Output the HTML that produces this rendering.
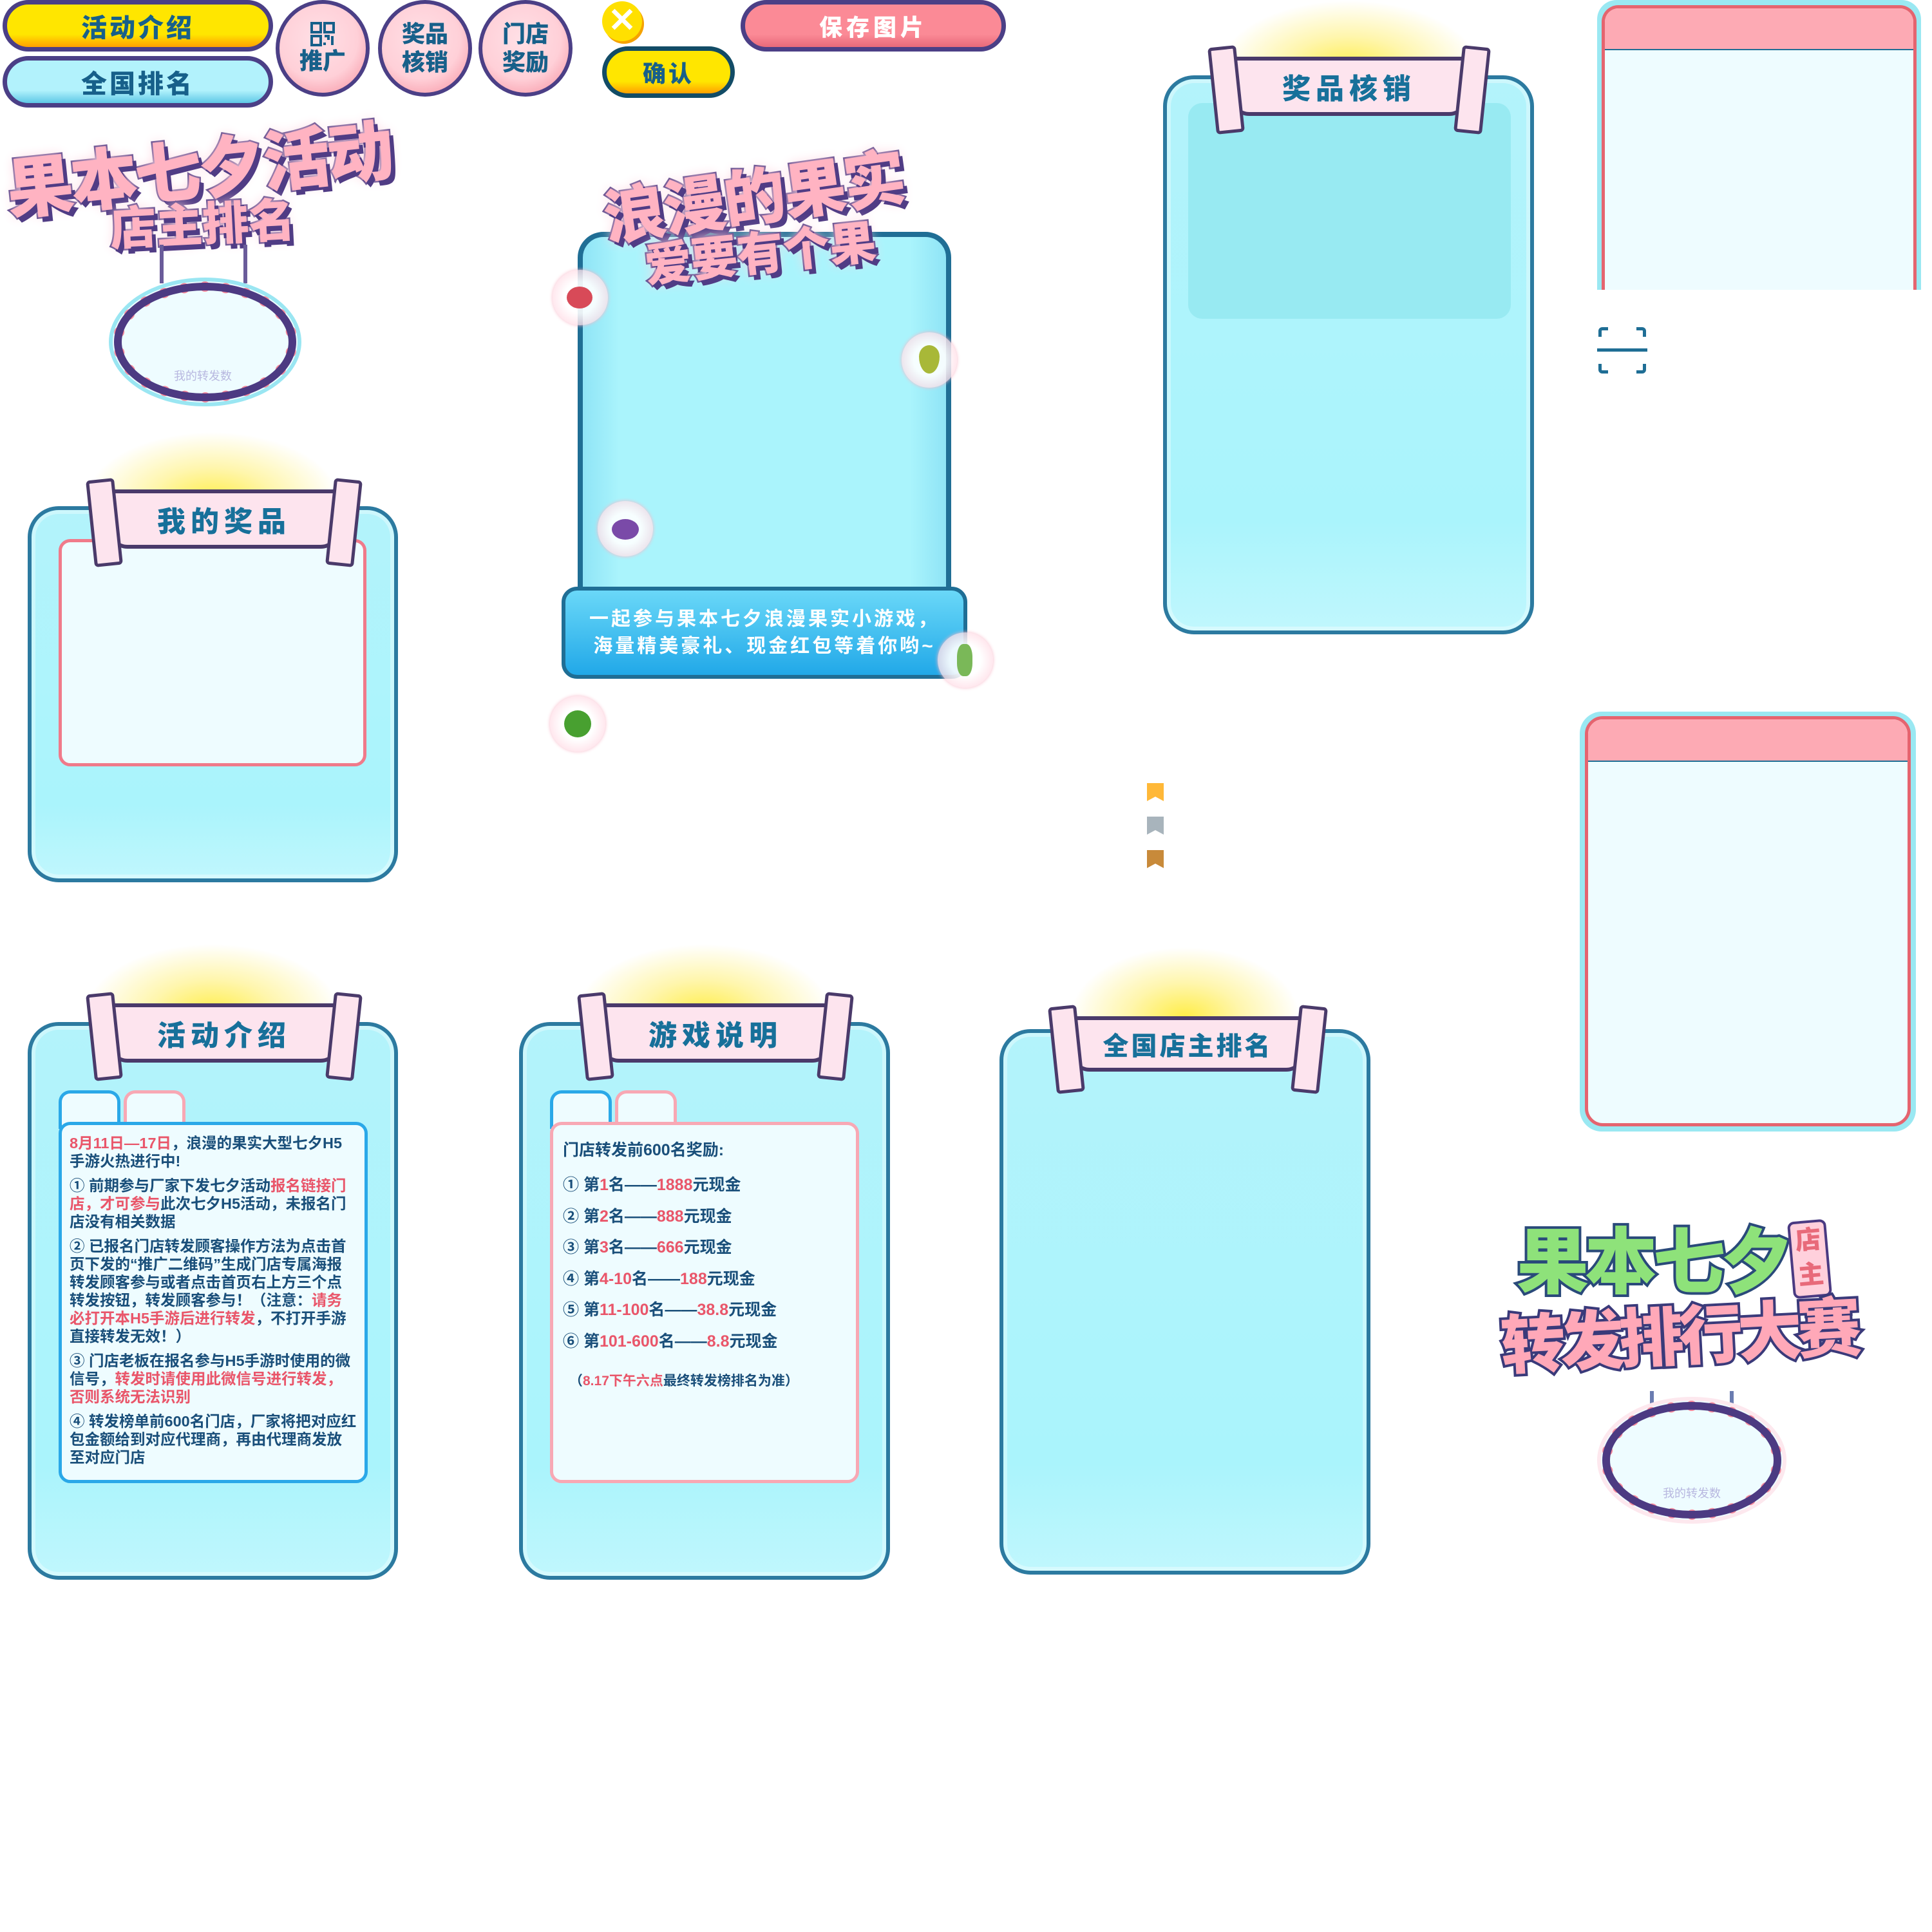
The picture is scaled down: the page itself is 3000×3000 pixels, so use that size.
<!DOCTYPE html>
<html><head><meta charset="utf-8">
<style>
*{margin:0;padding:0;box-sizing:border-box}
body{width:3000px;height:3000px;background:#fff;position:relative;overflow:hidden;font-family:"Liberation Sans","Noto Sans CJK SC",sans-serif}
.a{position:absolute}
.pill{position:absolute;border:7px solid #4b3f86;border-radius:60px;display:flex;align-items:center;justify-content:center;font-weight:900;color:#17608a;font-size:40px;letter-spacing:4px}
.circ{position:absolute;border:6px solid #4b3f86;border-radius:50%;background:radial-gradient(circle at 45% 40%,#ffe0e6 0,#ffd0d8 55%,#f48a9a 100%);display:flex;flex-direction:column;align-items:center;justify-content:center;text-align:center;font-weight:900;color:#17608a;font-size:36px;line-height:44px}
.card{position:absolute;border:6px solid #2c7aa0;border-radius:48px;background:linear-gradient(#b3f3fb,#aaf4fc 80%,#c0f7fd);box-shadow:inset 0 0 0 6px rgba(255,255,255,.35)}
.rays{position:absolute;height:120px;background:radial-gradient(ellipse at 50% 100%,rgba(255,236,60,.95) 0,rgba(255,240,120,.6) 35%,rgba(255,255,255,0) 70%)}
.ribbon{position:absolute;background:#fde4ee;border:6px solid #4a3a6a;border-radius:10px 10px 30px 30px/10px 10px 30px 30px;display:flex;align-items:center;justify-content:center;font-weight:900;color:#17709a;font-size:44px;letter-spacing:8px}
.ribbon:before,.ribbon:after{content:"";position:absolute;top:-22px;width:34px;height:125px;background:#fde4ee;border:5px solid #4a3a6a;border-radius:6px}
.ribbon:before{left:-34px;transform:rotate(-6deg)}
.ribbon:after{right:-34px;transform:rotate(6deg)}
.big{font-weight:900;color:#ffb3c2;-webkit-text-stroke:5px #503c85;paint-order:stroke fill;text-shadow:6px 8px 0 #503c85,0 0 18px #ffd6e0}
.fruit{position:absolute;border-radius:50%;background:radial-gradient(circle,rgba(255,255,255,.9) 40%,rgba(255,200,215,.7) 90%);box-shadow:0 0 6px #f8b8c8}
.marq{position:absolute;border:16px dotted #f88a9c;outline:12px solid #4c3a82;outline-offset:-14px;border-radius:50%/50%;background:#eefcff;box-shadow:0 0 0 6px #9ae6f2}
.txt{font-size:23.5px;line-height:28px;color:#1a4f7a;font-weight:700}
.r{color:#e9566a}
.gl{font-size:25px;font-weight:700;color:#1a4f7a;position:absolute;left:874px}
</style></head><body>

<!-- top buttons -->
<div class="pill" style="left:4px;top:0;width:420px;height:80px;background:linear-gradient(#ffe600 70%,#ffa000);">活动介绍</div>
<div class="pill" style="left:4px;top:87px;width:420px;height:80px;background:linear-gradient(#b2f2fc 70%,#5ec8e6);">全国排名</div>
<div class="circ" style="left:428px;top:0;width:146px;height:150px"><svg width="40" height="40" viewBox="0 0 40 40" fill="none" stroke="#17608a" stroke-width="4"><rect x="3" y="3" width="14" height="14"/><rect x="23" y="3" width="14" height="14"/><rect x="3" y="23" width="14" height="14"/><path d="M23 23h6v6M35 23v14M23 33v4"/></svg><span>推广</span></div>
<div class="circ" style="left:587px;top:0;width:146px;height:150px">奖品<br>核销</div>
<div class="circ" style="left:743px;top:0;width:146px;height:150px">门店<br>奖励</div>
<div class="a" style="left:935px;top:2px;width:62px;height:62px;border-radius:50%;background:#ffe000;box-shadow:3px 4px 0 #f5a200;color:#fff;font-size:52px;font-weight:900;text-align:center;line-height:60px">✕</div>
<div class="pill" style="left:935px;top:72px;width:206px;height:80px;border-color:#124c66;background:linear-gradient(#ffe600 72%,#ffa000);font-size:36px">确认</div>
<div class="pill" style="left:1150px;top:0;width:412px;height:80px;background:linear-gradient(#fb8a96 70%,#e86a7a);color:#fff;font-size:36px;letter-spacing:6px">保存图片</div>

<!-- title left -->
<div class="a big" style="left:8px;top:180px;font-size:104px;transform:rotate(-6deg);white-space:nowrap;letter-spacing:-4px">果本七夕活动</div>
<div class="a big" style="left:170px;top:290px;font-size:72px;transform:rotate(-3deg);white-space:nowrap">店主排名</div>
<div class="a" style="left:248px;top:380px;width:6px;height:60px;background:#6a5c9a"></div>
<div class="a" style="left:378px;top:380px;width:6px;height:60px;background:#6a5c9a"></div>
<div class="marq" style="left:175px;top:437px;width:287px;height:188px"></div>
<div class="a" style="left:270px;top:570px;font-size:18px;color:#b8b8e0">我的转发数</div>

<!-- center poster -->
<div class="a" style="left:897px;top:360px;width:580px;height:600px;border:8px solid #1f6e95;border-radius:40px;background:linear-gradient(90deg,#8fe4f6,#aaf4fc 10%,#aaf4fc 90%,#8fe4f6)"></div>
<div class="a" style="left:872px;top:911px;width:630px;height:143px;border:6px solid #1f6e95;border-radius:24px;background:linear-gradient(#6ad8f8,#21a8e8);color:#fff;font-size:30px;font-weight:700;text-align:center;line-height:42px;padding-top:24px;letter-spacing:4px">一起参与果本七夕浪漫果实小游戏，<br>海量精美豪礼、现金红包等着你哟~</div>
<div class="a big" style="left:935px;top:230px;font-size:96px;transform:rotate(-8deg);white-space:nowrap;letter-spacing:-2px">浪漫的果实</div>
<div class="a big" style="left:1000px;top:335px;font-size:72px;transform:rotate(-6deg);white-space:nowrap">爱要有个果</div>
<div class="fruit" style="left:858px;top:419px;width:86px;height:86px"><div class="a" style="left:22px;top:26px;width:40px;height:34px;border-radius:50%;background:#d84a58"></div></div>
<div class="fruit" style="left:1400px;top:516px;width:86px;height:86px"><div class="a" style="left:27px;top:20px;width:32px;height:44px;border-radius:50% 50% 50% 50%/40% 40% 60% 60%;background:#a8b838"></div></div>
<div class="fruit" style="left:928px;top:778px;width:86px;height:86px"><div class="a" style="left:22px;top:28px;width:42px;height:32px;border-radius:50%;background:#7a4aa8"></div></div>
<div class="fruit" style="left:1456px;top:982px;width:86px;height:86px"><div class="a" style="left:30px;top:18px;width:24px;height:50px;border-radius:40%;background:#7ab858"></div></div>
<div class="fruit" style="left:854px;top:1081px;width:86px;height:86px"><div class="a" style="left:22px;top:22px;width:42px;height:42px;border-radius:50%;background:#48a030"></div></div>

<!-- 奖品核销 -->
<div class="rays" style="left:1890px;top:0;width:410px;height:110px"></div>
<div class="card" style="left:1806px;top:117px;width:576px;height:868px"></div>
<div class="a" style="left:1845px;top:160px;width:501px;height:335px;border-radius:22px;background:#98eaf2"></div>
<div class="ribbon" style="left:1910px;top:88px;width:370px;height:92px">奖品核销</div>

<!-- right top panel -->
<div class="a" style="left:2480px;top:0;width:503px;height:450px;background:#9ae8f2;border-radius:30px 30px 0 0"></div>
<div class="a" style="left:2487px;top:8px;width:489px;height:442px;border:5px solid #e5646f;border-bottom:none;border-radius:26px 26px 0 0;background:#eefcff;overflow:hidden"><div style="height:65px;background:#fdaab4;border-bottom:2px solid #1f6e95"></div></div>
<div class="a" style="left:2482px;top:508px;width:74px;height:72px;border:5px solid #1f6e95;border-radius:6px"></div>
<div class="a" style="left:2497px;top:504px;width:44px;height:80px;background:#fff"></div>
<div class="a" style="left:2478px;top:523px;width:82px;height:42px;background:#fff"></div>
<div class="a" style="left:2480px;top:541px;width:78px;height:5px;background:#1f6e95"></div>

<!-- 我的奖品 -->
<div class="rays" style="left:130px;top:670px;width:400px;height:110px"></div>
<div class="card" style="left:43px;top:786px;width:575px;height:584px"></div>
<div class="a" style="left:91px;top:837px;width:478px;height:353px;border:5px solid #f07a8a;border-radius:18px;background:#eefcff"></div>
<div class="ribbon" style="left:168px;top:760px;width:360px;height:92px">我的奖品</div>

<!-- bookmarks -->
<div class="a" style="left:1781px;top:1216px;width:26px;height:28px;background:#ffb838;clip-path:polygon(0 0,100% 0,100% 100%,50% 75%,0 100%)"></div>
<div class="a" style="left:1781px;top:1268px;width:26px;height:28px;background:#a8b4bc;clip-path:polygon(0 0,100% 0,100% 100%,50% 75%,0 100%)"></div>
<div class="a" style="left:1781px;top:1320px;width:26px;height:28px;background:#c88a3a;clip-path:polygon(0 0,100% 0,100% 100%,50% 75%,0 100%)"></div>

<!-- right middle panel -->
<div class="a" style="left:2453px;top:1105px;width:522px;height:652px;background:#9ae8f2;border-radius:34px"></div>
<div class="a" style="left:2461px;top:1112px;width:506px;height:637px;border:5px solid #e5646f;border-radius:28px;background:#eefcff;overflow:hidden"><div style="height:66px;background:#fdaab4;border-bottom:2px solid #1f6e95"></div></div>

<!-- 活动介绍 card -->
<div class="rays" style="left:130px;top:1465px;width:400px;height:110px"></div>
<div class="card" style="left:43px;top:1587px;width:575px;height:866px"></div>
<div class="a" style="left:91px;top:1693px;width:96px;height:60px;border:5px solid #2aa8e8;border-bottom:none;border-radius:18px 18px 0 0;background:#eefcff"></div>
<div class="a" style="left:192px;top:1693px;width:96px;height:52px;border:5px solid #f8a8b4;border-bottom:none;border-radius:18px 18px 0 0;background:#eefcff"></div>
<div class="a" style="left:91px;top:1742px;width:480px;height:561px;border:5px solid #2aa8e8;border-radius:18px;background:#eefcff;padding:14px 12px 0 12px" >
<div class="txt"><span class="r">8月11日—17日</span>，浪漫的果实大型七夕H5手游火热进行中!</div>
<div class="txt" style="margin-top:10px">① 前期参与厂家下发七夕活动<span class="r">报名链接门店，才可参与</span>此次七夕H5活动，未报名门店没有相关数据</div>
<div class="txt" style="margin-top:10px">② 已报名门店转发顾客操作方法为点击首页下发的“推广二维码”生成门店专属海报转发顾客参与或者点击首页右上方三个点转发按钮，转发顾客参与！（注意：<span class="r">请务必打开本H5手游后进行转发</span>，不打开手游直接转发无效！）</div>
<div class="txt" style="margin-top:10px">③ 门店老板在报名参与H5手游时使用的微信号，<span class="r">转发时请使用此微信号进行转发，否则系统无法识别</span></div>
<div class="txt" style="margin-top:10px">④ 转发榜单前600名门店，厂家将把对应红包金额给到对应代理商，再由代理商发放至对应门店</div>
</div>
<div class="ribbon" style="left:168px;top:1558px;width:360px;height:92px">活动介绍</div>

<!-- 游戏说明 card -->
<div class="rays" style="left:893px;top:1465px;width:400px;height:110px"></div>
<div class="card" style="left:806px;top:1587px;width:576px;height:866px"></div>
<div class="a" style="left:854px;top:1693px;width:96px;height:60px;border:5px solid #2aa8e8;border-bottom:none;border-radius:18px 18px 0 0;background:#eefcff"></div>
<div class="a" style="left:955px;top:1693px;width:96px;height:60px;border:5px solid #f8a8b4;border-bottom:none;border-radius:18px 18px 0 0;background:#eefcff"></div>
<div class="a" style="left:854px;top:1742px;width:480px;height:561px;border:5px solid #f8a8b4;border-radius:18px;background:#eefcff"></div>
<div class="gl r" style="top:1766px">门店转发前600名奖励:</div>
<div class="gl" style="top:1820px">① 第<span class="r">1</span>名——<span class="r">1888</span>元现金</div>
<div class="gl" style="top:1869px">② 第<span class="r">2</span>名——<span class="r">888</span>元现金</div>
<div class="gl" style="top:1917px">③ 第<span class="r">3</span>名——<span class="r">666</span>元现金</div>
<div class="gl" style="top:1966px">④ 第<span class="r">4-10</span>名——<span class="r">188</span>元现金</div>
<div class="gl" style="top:2014px">⑤ 第<span class="r">11-100</span>名——<span class="r">38.8</span>元现金</div>
<div class="gl" style="top:2063px">⑥ 第<span class="r">101-600</span>名——<span class="r">8.8</span>元现金</div>
<div class="gl" style="top:2128px;left:884px;font-size:21px;color:#1a4f7a">（<span class="r">8.17下午六点</span>最终转发榜排名为准）</div>
<div class="ribbon" style="left:931px;top:1558px;width:360px;height:92px">游戏说明</div>

<!-- 全国店主排名 card -->
<div class="rays" style="left:1660px;top:1470px;width:360px;height:110px"></div>
<div class="card" style="left:1552px;top:1598px;width:576px;height:847px"></div>
<div class="ribbon" style="left:1662px;top:1578px;width:365px;height:86px;font-size:40px;letter-spacing:4px">全国店主排名</div>

<!-- bottom right logo -->
<div class="a" style="left:2355px;top:1870px;font-size:112px;font-weight:900;color:#8ee27a;-webkit-text-stroke:8px #2a4a7a;paint-order:stroke fill;white-space:nowrap;letter-spacing:-6px">果本七夕</div>
<div class="a" style="left:2780px;top:1895px;width:60px;height:120px;border:4px solid #4a3a82;border-radius:10px;background:#ffd0dc;font-size:40px;font-weight:900;color:#e86a7a;line-height:54px;text-align:center;transform:rotate(-5deg)">店<br>主</div>
<div class="a" style="left:2330px;top:1995px;font-size:100px;font-weight:900;color:#ffa8b8;-webkit-text-stroke:8px #3a3a7a;paint-order:stroke fill;white-space:nowrap;letter-spacing:-8px;transform:rotate(-3deg)">转发排行大赛</div>
<div class="a" style="left:2562px;top:2160px;width:6px;height:60px;background:#6a7cb0"></div>
<div class="a" style="left:2686px;top:2160px;width:6px;height:60px;background:#6a7cb0"></div>
<div class="marq" style="left:2486px;top:2175px;width:282px;height:185px;box-shadow:0 0 0 6px #fde8ee"></div>
<div class="a" style="left:2582px;top:2305px;font-size:18px;color:#b8b8e0">我的转发数</div>

</body></html>
